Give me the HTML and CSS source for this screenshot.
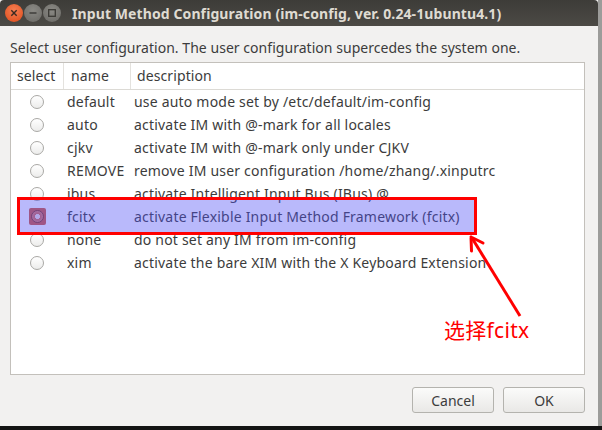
FILE: index.html
```html
<!DOCTYPE html>
<html>
<head>
<meta charset="utf-8">
<link rel="stylesheet" href="styles.css">
</head>
<body>
<div class="window">
  <div class="titlebar">
    <div class="wbtns">
      <span class="wbtn close"><svg width="18" height="18" viewBox="0 0 18 18"><path d="M6.3 6.3 L11.7 11.7 M11.7 6.3 L6.3 11.7" stroke="#3a2a22" stroke-width="1.4" fill="none"/></svg></span>
      <span class="wbtn"><svg width="18" height="18" viewBox="0 0 18 18"><path d="M5.5 9 H12.5" stroke="#3a3935" stroke-width="1.4"/></svg></span>
      <span class="wbtn"><svg width="18" height="18" viewBox="0 0 18 18"><rect x="5.7" y="5.7" width="6.6" height="6.6" stroke="#3a3935" stroke-width="1.3" fill="none"/></svg></span>
    </div>
    <div class="title">Input Method Configuration (im-config, ver. 0.24-1ubuntu4.1)</div>
  </div>
  <div class="body">
    <div class="prompt">Select user configuration. The user configuration supercedes the system one.</div>
    <div class="frame">
      <div class="row head">
        <div class="c-sel">select</div>
        <div class="c-name">name</div>
        <div class="c-desc">description</div>
      </div>
      <div class="row"><div class="c-sel"><span class="radio"></span></div><div class="c-name">default</div><div class="c-desc">use auto mode set by /etc/default/im-config</div></div>
      <div class="row"><div class="c-sel"><span class="radio"></span></div><div class="c-name">auto</div><div class="c-desc">activate IM with @-mark for all locales</div></div>
      <div class="row"><div class="c-sel"><span class="radio"></span></div><div class="c-name">cjkv</div><div class="c-desc">activate IM with @-mark only under CJKV</div></div>
      <div class="row"><div class="c-sel"><span class="radio"></span></div><div class="c-name">REMOVE</div><div class="c-desc">remove IM user configuration /home/zhang/.xinputrc</div></div>
      <div class="row"><div class="c-sel"><span class="radio"></span></div><div class="c-name">ibus</div><div class="c-desc">activate Intelligent Input Bus (IBus) @</div></div>
      <div class="row"><div class="c-sel"><span class="selcell"><span class="radio on"></span></span></div><div class="c-name">fcitx</div><div class="c-desc">activate Flexible Input Method Framework (fcitx)</div></div>
      <div class="row"><div class="c-sel"><span class="radio"></span></div><div class="c-name">none</div><div class="c-desc">do not set any IM from im-config</div></div>
      <div class="row"><div class="c-sel"><span class="radio"></span></div><div class="c-name">xim</div><div class="c-desc">activate the bare XIM with the X Keyboard Extension</div></div>
      <div class="mark"></div>
    </div>
    <div class="actions">
      <button class="btn">Cancel</button>
      <button class="btn">OK</button>
    </div>
  </div>
</div>
<svg class="arrow" width="602" height="430" viewBox="0 0 602 430">
  <path d="M520 316 L472 238" stroke="#f00" stroke-width="3" fill="none"/>
  <path d="M471 237 L471.5 251 M471 237 L483 243" stroke="#f00" stroke-width="3" fill="none" stroke-linecap="round"/>
</svg>
<div class="note">选择fcitx</div>
</body>
</html>
```
FILE: styles.css
```css
html, body {
  margin: 0;
  padding: 0;
}
body {
  width: 602px;
  height: 430px;
  background: #141414;
  position: relative;
  overflow: hidden;
  font-family: "Noto Sans", "DejaVu Sans", sans-serif;
  color: #3c3c3c;
}
.window {
  width: 598px;
  height: 426px;
  border-right: 4px solid #9c9c9a;
  background: #f2f1f0;
  display: flex;
  flex-direction: column;
}
.titlebar {
  height: 26px;
  flex: none;
  background: linear-gradient(#3d3c38, #4c4a45);
  display: flex;
  align-items: center;
  border-radius: 4px 4px 0 0;
}
.wbtns {
  display: flex;
  gap: 1px;
  padding-left: 5px;
  width: 67px;
  box-sizing: border-box;
}
.wbtn {
  width: 18px;
  height: 18px;
  border-radius: 50%;
  background: radial-gradient(circle at 50% 35%, #8a8984, #696864);
  display: block;
}
.wbtn.close {
  background: radial-gradient(circle at 50% 35%, #f47e52, #df4b1a);
}
.wbtn svg { display: block; }
.title {
  color: #dfdbd2;
  font-weight: bold;
  font-size: 14px;
  letter-spacing: 0.1px;
  padding-left: 5px;
  white-space: nowrap;
}
.body {
  flex: 1;
  padding: 12px 13px 0 10px;
  display: flex;
  flex-direction: column;
}
.prompt {
  font-size: 14px;
  line-height: 20px;
  height: 24px;
  letter-spacing: 0.04px;
  white-space: nowrap;
}
.frame {
  position: relative;
  height: 311px;
  border: 1px solid #c3c0bb;
  background: #fff;
  font-size: 14px;
  letter-spacing: 0.2px;
}
.row {
  display: flex;
  height: 23px;
  align-items: center;
  white-space: nowrap;
}
.row.head {
  height: 26px;
  border-bottom: 1px solid #dcdad5;
  letter-spacing: 0.1px;
}
.c-sel {
  width: 52px;
  display: flex;
  justify-content: center;
}
.c-name {
  width: 67px;
  padding-left: 4px;
  box-sizing: border-box;
}
.c-desc {
  padding-left: 4px;
}
.head > div {
  height: 26px;
  line-height: 26px;
}
.head .c-sel {
  border-right: 1px solid #e4e2de;
  justify-content: flex-start;
  padding-left: 6px;
  width: 46px;
}
.head .c-name {
  padding-left: 7px;
  border-right: 1px solid #e4e2de;
}
.head .c-desc { padding-left: 6px; }
.radio {
  width: 14px;
  height: 14px;
  border-radius: 50%;
  border: 1px solid #a9a8a5;
  background: linear-gradient(#ffffff, #ececeb);
  display: block;
  box-sizing: border-box;
}
.selcell {
  width: 17px;
  height: 17px;
  border-radius: 2px;
  background: #d45a3c;
  display: flex;
  align-items: center;
  justify-content: center;
}
.radio.on {
  width: 13px;
  height: 13px;
  border-color: #8a3a28;
  background: radial-gradient(circle, #f6e2dc 0 2.2px, #d66a50 2.8px, #e99a86 100%);
}
.mark {
  position: absolute;
  left: 6px;
  top: 134px;
  width: 460px;
  height: 38px;
  box-sizing: border-box;
  border: 3px solid #f00;
  background: rgba(80, 80, 246, 0.4);
}
.actions {
  display: flex;
  justify-content: flex-end;
  gap: 9px;
  padding-top: 12px;
}
.btn {
  width: 82px;
  height: 26px;
  border: 1px solid #b4b3ae;
  border-radius: 3px;
  background: linear-gradient(#fbfbfa, #e9e8e6);
  font-family: "Noto Sans", "DejaVu Sans", sans-serif;
  font-size: 14px;
  color: #3c3c3c;
  padding: 0;
}
.arrow {
  position: absolute;
  left: 0;
  top: 0;
  pointer-events: none;
}
.note {
  position: absolute;
  left: 444px;
  top: 316px;
  font-size: 21px;
  line-height: 28px;
  letter-spacing: 0.3px;
  color: #f00;
  font-family: "Noto Sans", "Noto Sans CJK SC", sans-serif;
}
```
